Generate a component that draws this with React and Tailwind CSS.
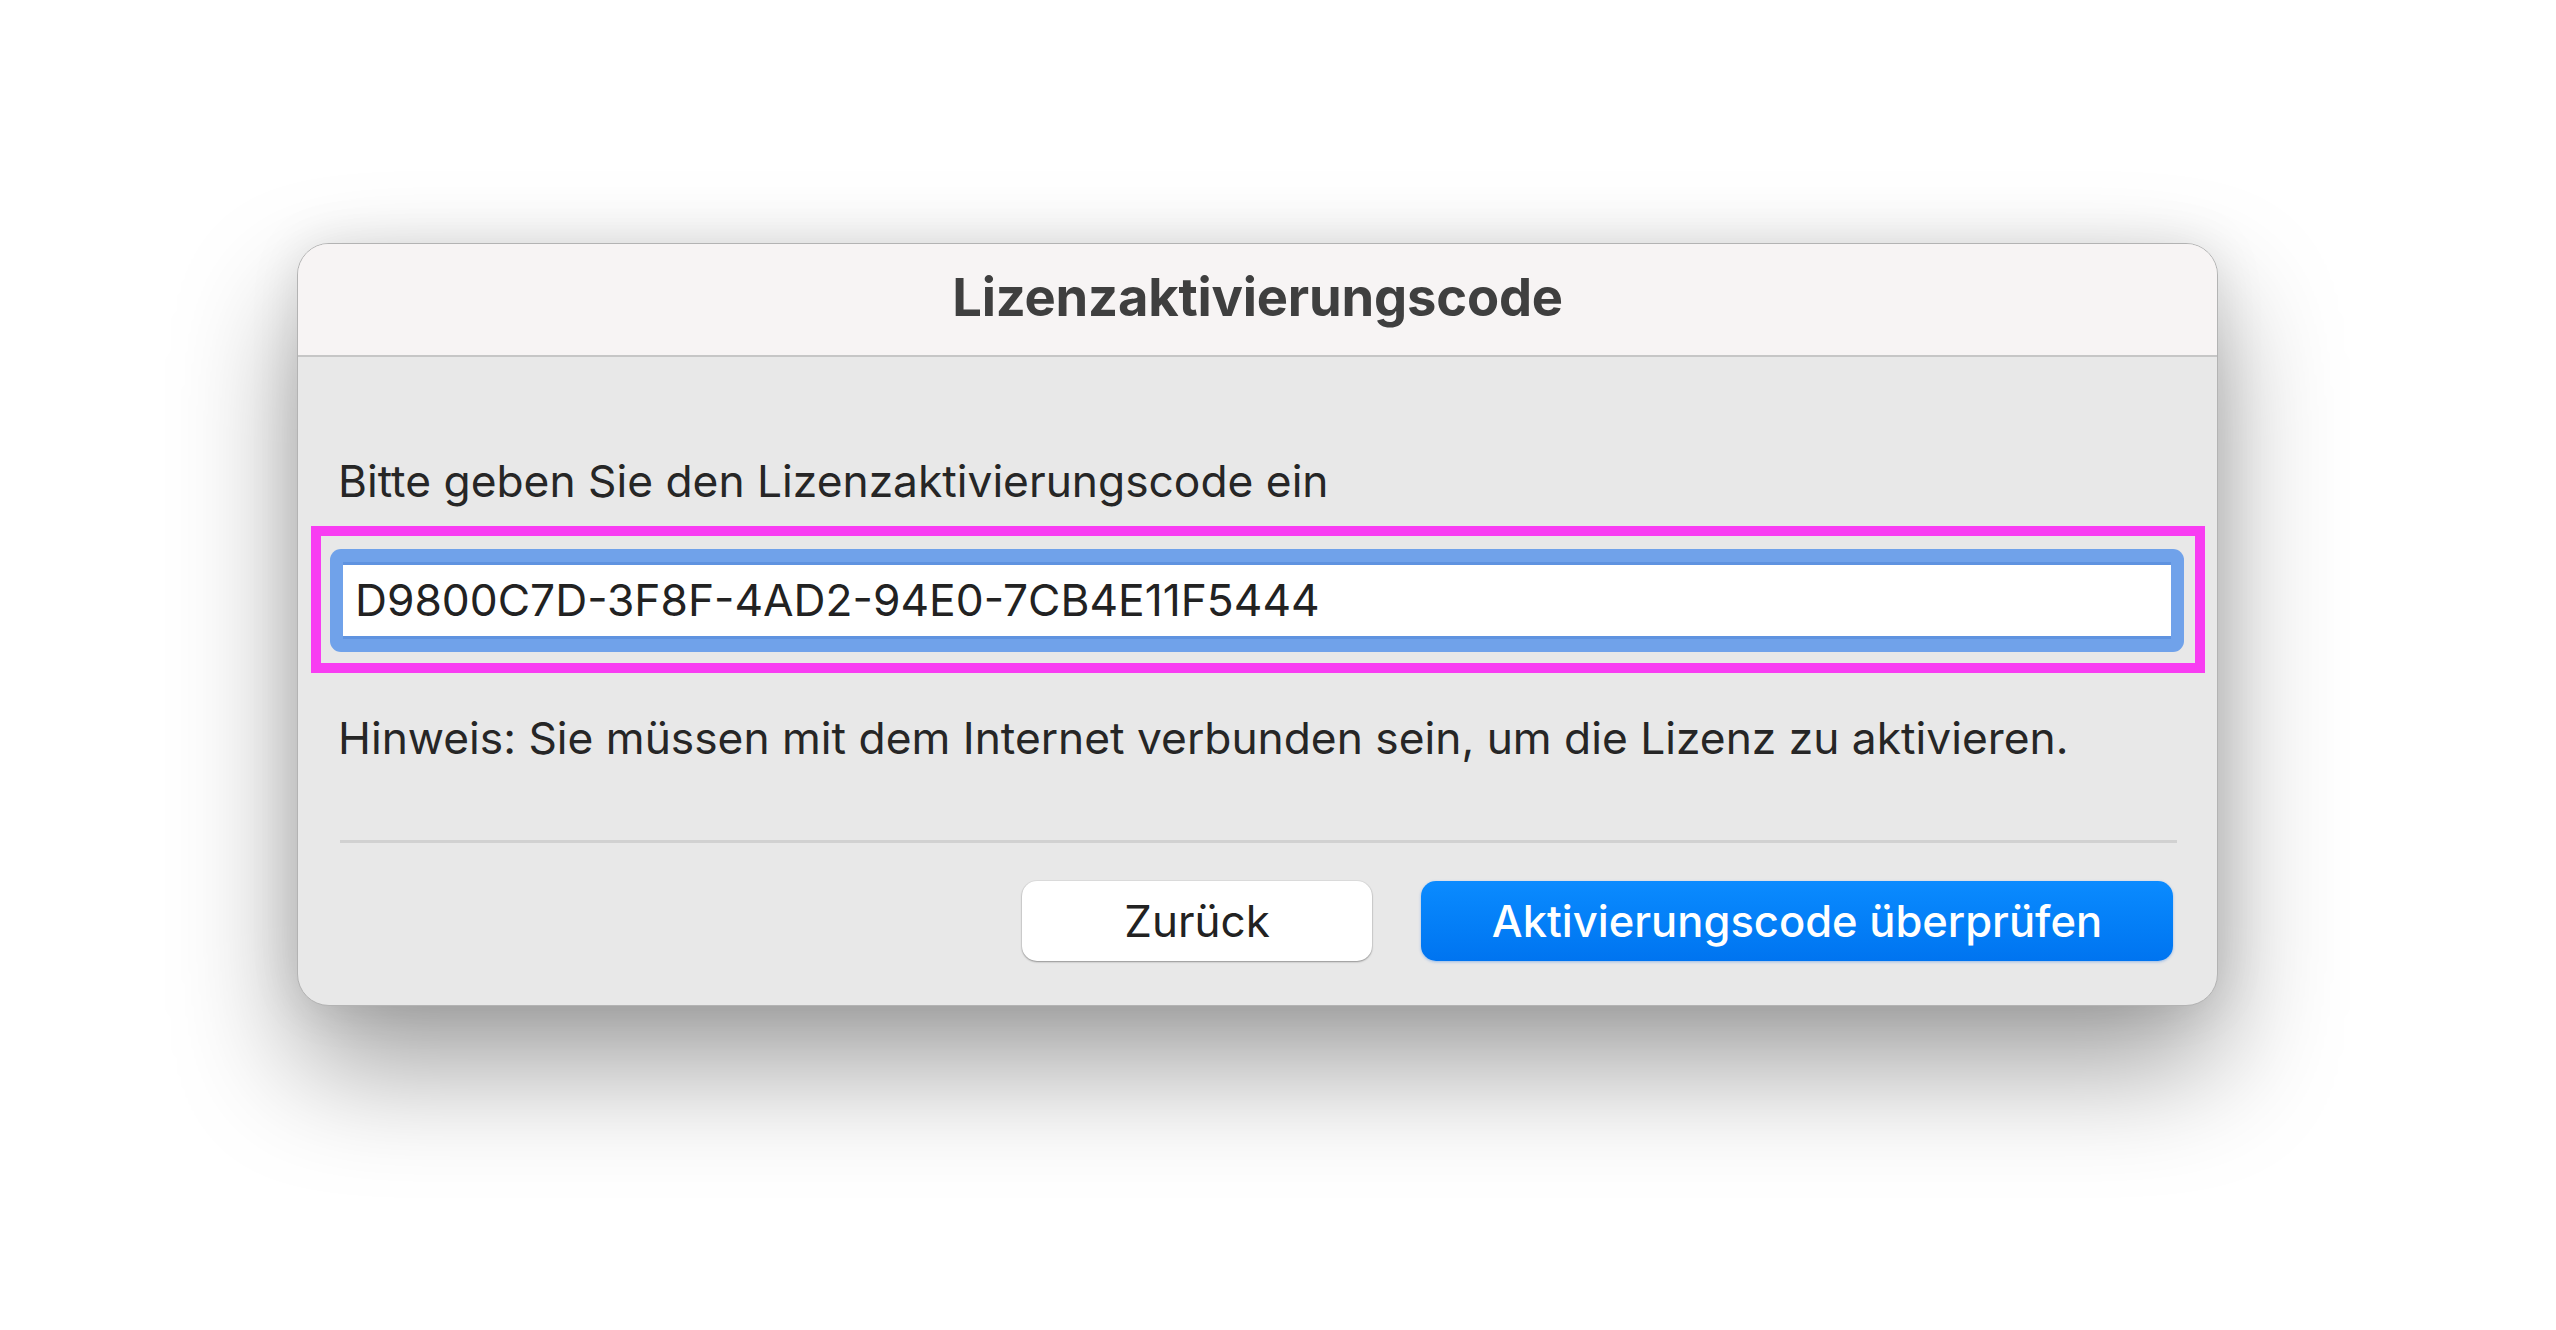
import React from "react";

export default function App() {
  return (
    <div
      className="min-h-[1330px] w-[2556px] bg-white pt-[243px] pl-[297px]"
      style={{ fontFamily: "Inter, 'Liberation Sans', sans-serif" }}
    >
      <div className="w-[1921px] h-[763px] rounded-[32px] border border-[#b3b3b3] bg-[#e8e8e8] overflow-hidden shadow-[0_60px_120px_rgba(0,0,0,0.38),0_0_50px_rgba(0,0,0,0.10)] flex flex-col">
        <div className="h-[113px] shrink-0 bg-[#f7f4f4] border-b-2 border-[#c6c6c6] flex items-center justify-center pb-[6px]">
          <span className="text-[52.5px] leading-[62px] font-bold text-[#3f3f3f] tracking-[-0.2px]">
            Lizenzaktivierungscode
          </span>
        </div>
        <div className="flex flex-col pt-[98px]">
          <p className="pl-[40px] text-[44.3px] leading-[53px] text-[#262626]">
            Bitte geben Sie den Lizenzaktivierungscode ein
          </p>
          <div className="relative mt-[41px] ml-[32px] mr-[33px]">
            <div className="rounded-[11px] bg-[#70a2ea] p-[13px]">
              <div className="h-[77px] bg-white border-t-[3px] border-b-[3px] border-[#5f93e0] flex items-center pl-[12px]">
                <span className="text-[44.3px] leading-[53px] text-[#222222]">
                  D9800C7D-3F8F-4AD2-94E0-7CB4E11F5444
                </span>
              </div>
            </div>
            <div className="pointer-events-none absolute -left-[19px] -right-[21px] -top-[23px] -bottom-[21px] border-[10px] border-[#f83df2]"></div>
          </div>
          <p className="mt-[60px] pl-[40px] text-[44.3px] leading-[53px] text-[#262626]">
            Hinweis: Sie müssen mit dem Internet verbunden sein, um die Lizenz zu aktivieren.
          </p>
          <div className="mt-[75px] ml-[42px] mr-[40px] h-[3px] bg-[#d1d1d1]"></div>
          <div className="mt-[38px] mr-[44px] flex justify-end gap-[49px]">
            <button className="w-[350px] h-[80px] rounded-[15px] bg-white shadow-[0_1px_2px_rgba(0,0,0,0.35),0_0_0_1px_rgba(0,0,0,0.04)] text-[44px] leading-[53px] text-[#222222] flex items-center justify-center">
              Zurück
            </button>
            <button className="w-[752px] h-[80px] rounded-[15px] bg-linear-to-b from-[#0b8bff] to-[#0074f0] shadow-[0_1px_3px_rgba(0,100,230,0.35)] text-[43.5px] leading-[53px] font-medium text-white flex items-center justify-center">
              Aktivierungscode überprüfen
            </button>
          </div>
        </div>
      </div>
    </div>
  );
}
